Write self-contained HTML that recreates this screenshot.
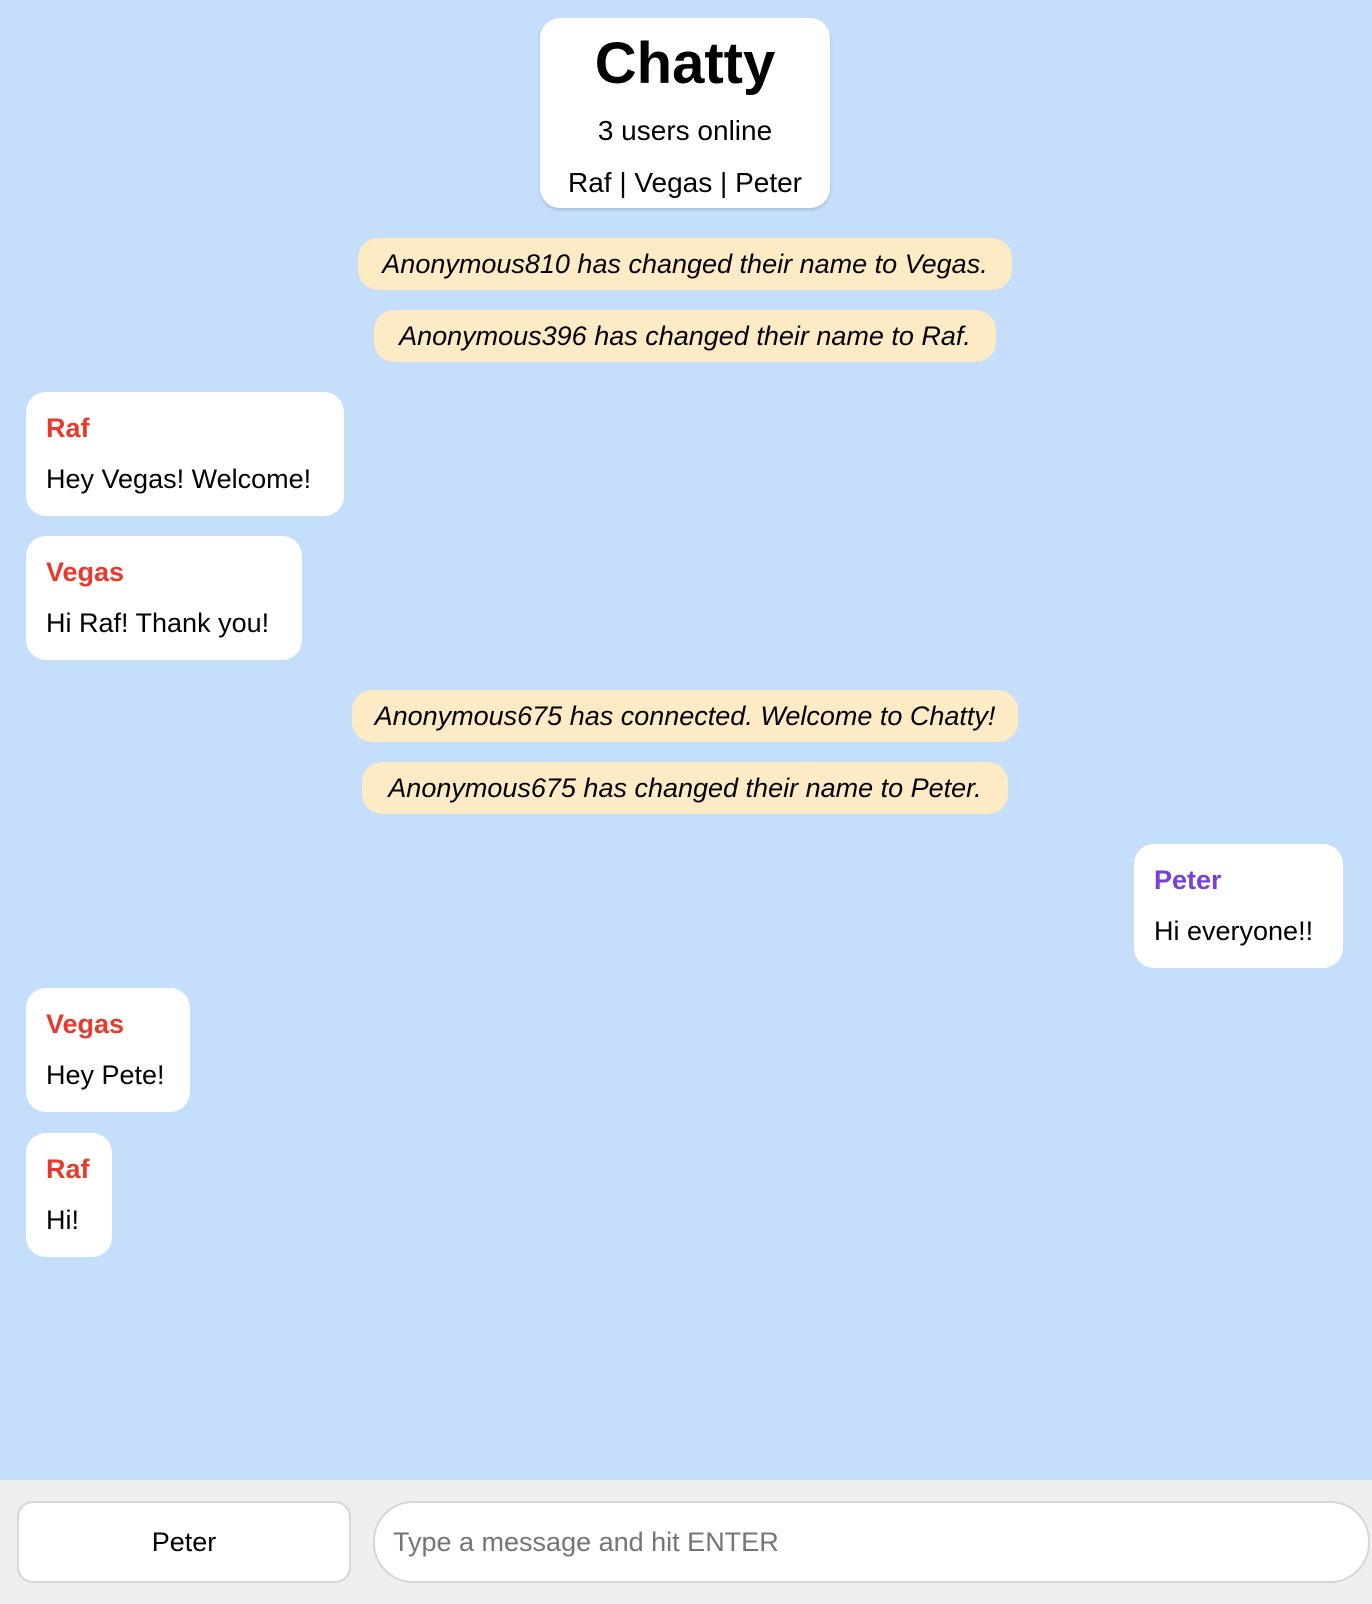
<!DOCTYPE html>
<html><head><meta charset="utf-8"><style>
*{margin:0;padding:0;box-sizing:border-box}
body{width:1372px;height:1604px;background:#c5defa;font-family:"Liberation Sans","DejaVu Sans",sans-serif;position:relative;overflow:hidden;color:#000}
.a{position:absolute}
.hdr{left:540px;top:18px;width:290px;height:190px;background:#fff;border-radius:20px;box-shadow:0 2px 3px rgba(0,0,0,.15);text-align:center}
.hdr h1{position:absolute;left:0;right:0;top:16px;font-size:58px;line-height:60px;font-weight:bold}
.hdr .c{position:absolute;left:0;right:0;top:97px;font-size:28px;line-height:32px}
.hdr .u{position:absolute;left:0;right:0;top:149px;font-size:28px;line-height:32px}
.sys{background:#fcebc4;border-radius:20px;height:52px;font-style:italic;font-size:27px;line-height:52px;text-align:center;white-space:nowrap}
.b{background:#fff;border-radius:20px;height:124px}
.b .n{position:absolute;left:20px;top:20px;font-size:27px;line-height:32px;font-weight:bold;color:#e8392a;white-space:nowrap}
.b .t{position:absolute;left:20px;top:71px;font-size:27px;line-height:32px;white-space:nowrap}
.bar{left:0;top:1480px;width:1372px;height:124px;background:#efefef}
.in{background:#fff;border:2px solid #d6d6d6;height:82px;top:1501px;font-size:27px;line-height:78px}
</style></head><body>
<div class="a hdr"><h1>Chatty</h1><div class="c">3 users online</div><div class="u">Raf | Vegas | Peter</div></div>
<div class="a sys" style="left:358px;top:238px;width:654px">Anonymous810 has changed their name to Vegas.</div>
<div class="a sys" style="left:374px;top:310px;width:622px">Anonymous396 has changed their name to Raf.</div>
<div class="a b" style="left:26px;top:392px;width:318px"><div class="n">Raf</div><div class="t">Hey Vegas! Welcome!</div></div>
<div class="a b" style="left:26px;top:536px;width:276px"><div class="n">Vegas</div><div class="t">Hi Raf! Thank you!</div></div>
<div class="a sys" style="left:352px;top:690px;width:666px">Anonymous675 has connected. Welcome to Chatty!</div>
<div class="a sys" style="left:362px;top:762px;width:646px">Anonymous675 has changed their name to Peter.</div>
<div class="a b" style="left:1134px;top:844px;width:209px"><div class="n" style="color:#7a3fd6">Peter</div><div class="t">Hi everyone!!</div></div>
<div class="a b" style="left:26px;top:988px;width:164px"><div class="n">Vegas</div><div class="t">Hey Pete!</div></div>
<div class="a b" style="left:26px;top:1133px;width:86px"><div class="n">Raf</div><div class="t">Hi!</div></div>
<div class="a bar"></div>
<div class="a in" style="left:17px;width:334px;border-radius:16px;text-align:center">Peter</div>
<div class="a in" style="left:373px;width:997px;border-radius:40px;padding-left:18px;color:#757575">Type a message and hit ENTER</div>
</body></html>
